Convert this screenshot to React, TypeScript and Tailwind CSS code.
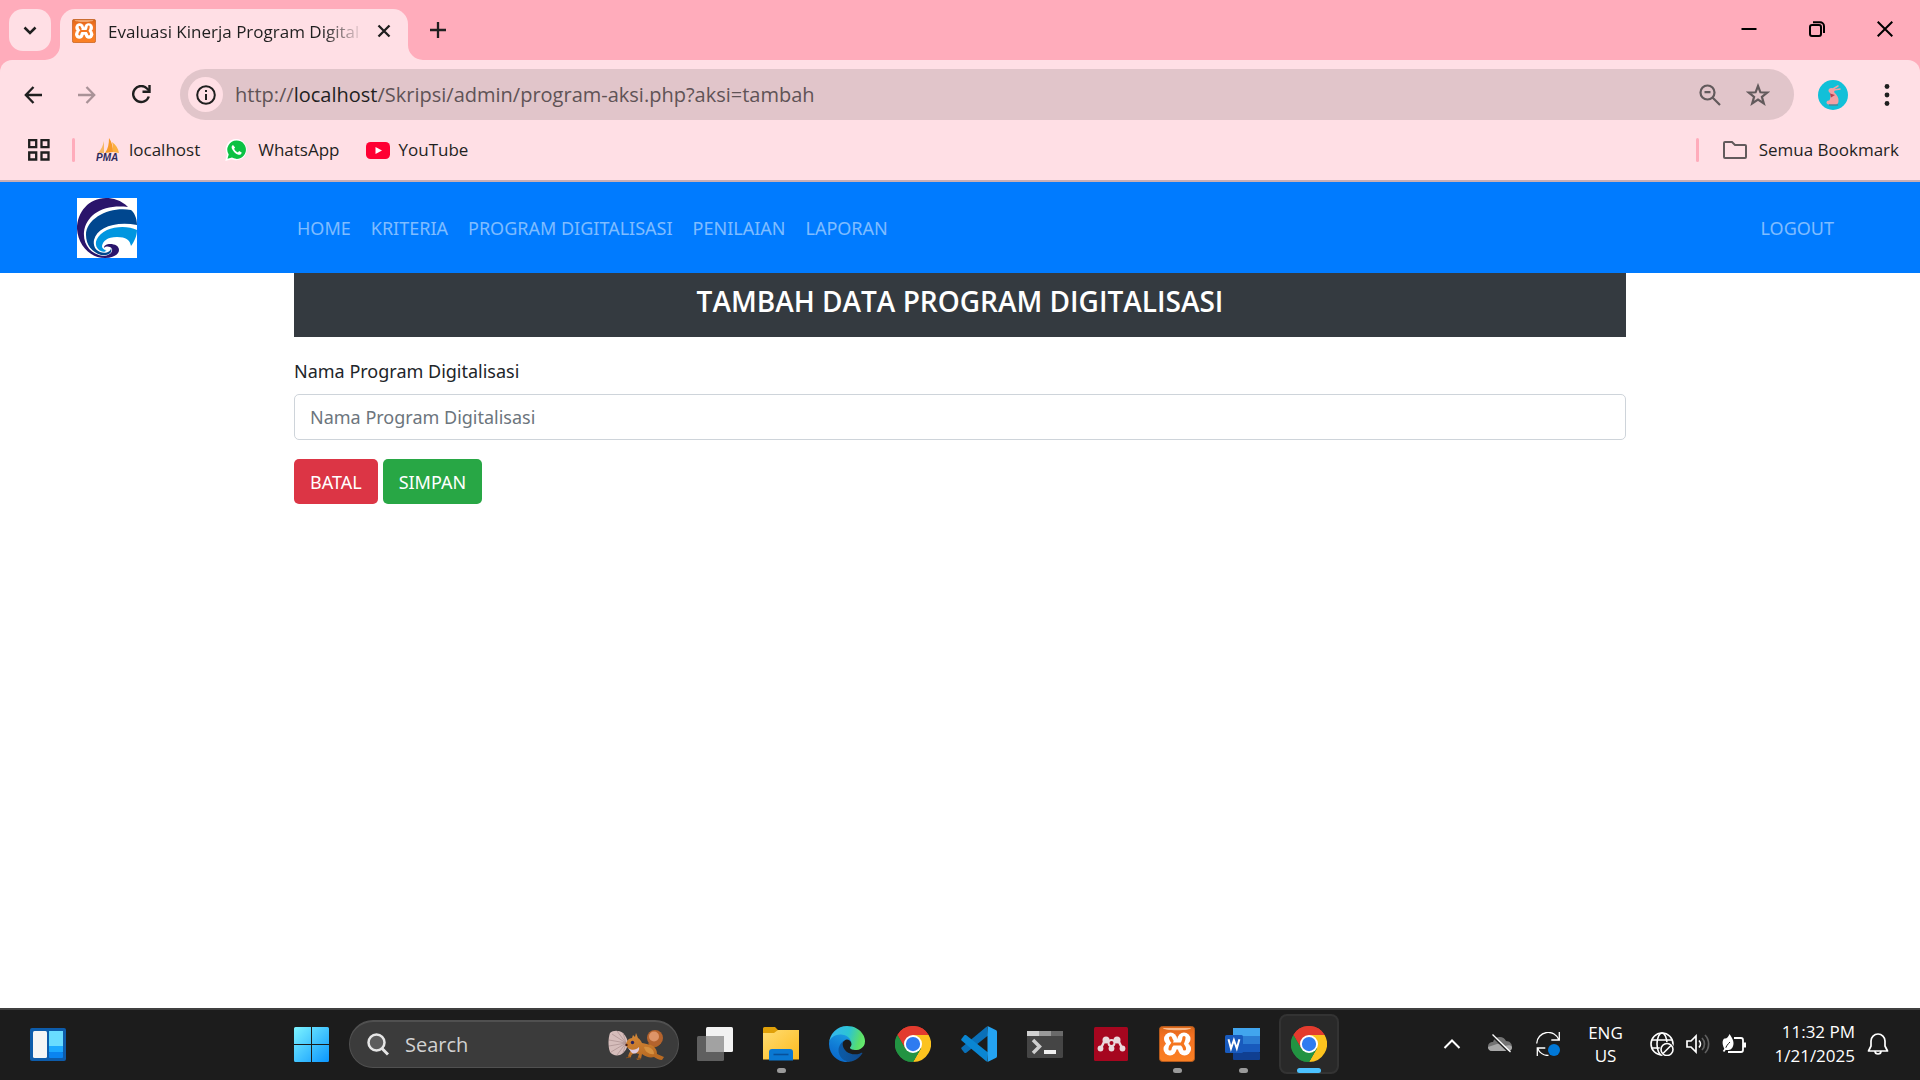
import React from 'react';

type Kids = { children: React.ReactNode };

function XamppIcon({ size, id }: { size: number; id: string }) {
  return (
    <svg width={size} height={size} viewBox="0 0 36 36" aria-hidden="true">
      <defs>
        <linearGradient id={id} x1="0" y1="0" x2="0" y2="1">
          <stop offset="0" stopColor="#d9671a" />
          <stop offset="0.25" stopColor="#f37021" />
          <stop offset="1" stopColor="#fb8124" />
        </linearGradient>
      </defs>
      <rect x="0.5" y="0.5" width="35" height="35" rx="3" fill={`url(#${id})`} stroke="#b65a1c" />
      <path d="M4 2h28c0 1.500-6 2.200-14 2.200S4 3.500 4 2z" fill="#f9b98a" />
      <g fill="#fff">
        <circle cx="11.500" cy="13" r="6.500" />
        <circle cx="25" cy="13" r="6.500" />
        <circle cx="11" cy="23" r="6.500" />
        <circle cx="25.500" cy="23" r="6.500" />
        <path d="M11 12.500h15v11H11z" />
      </g>
      <path d="M11.500 12c.5 1 .5 2 1.500 3M25 11.500c0 3-1 4-2 6.500h-9.500c-1.500 1.500-2.500 3-2.500 5M23 18c1 1.500 2.500 3 2.500 5" fill="none" stroke="#f5761f" strokeWidth="3.200" strokeLinecap="round" strokeLinejoin="round" />
    </svg>
  );
}

function ChromeIcon() {
  return (
    <svg width="36" height="36" viewBox="0 0 48 48" aria-hidden="true">
      <path d="M24 24 3.200 12A24 24 0 0 1 44.800 12z" fill="#e33b2e" />
      <path d="M24 12h20.800A24 24 0 0 1 24 48l10.400-18z" fill="#fcc31e" />
      <path d="M34.400 30 24 48A24 24 0 0 1 3.200 12l10.400 18z" fill="#229342" />
      <path d="M24 12h20.800A24 24 0 0 0 3.200 12l10.400 18z" fill="#e33b2e" />
      <path d="M3.200 12 13.600 30 24 36 34.400 30 24 48A24 24 0 0 1 3.200 12z" fill="#229342" />
      <circle cx="24" cy="24" r="12" fill="#fff" />
      <circle cx="24" cy="24" r="9.500" fill="#2f7bf0" />
    </svg>
  );
}

function EdgeIcon() {
  return (
    <svg width="36" height="36" viewBox="0 0 256 256" aria-hidden="true">
      <defs>
        <linearGradient id="edgeA" x1="0.2" y1="0.5" x2="1" y2="0.5">
          <stop offset="0" stopColor="#0c59a4" />
          <stop offset="1" stopColor="#114a8b" />
        </linearGradient>
        <linearGradient id="edgeB" x1="0.7" y1="0" x2="0.3" y2="1">
          <stop offset="0" stopColor="#1b9de2" />
          <stop offset="0.6" stopColor="#0f78d4" />
          <stop offset="1" stopColor="#0a67c8" />
        </linearGradient>
        <linearGradient id="edgeC" x1="0" y1="0.4" x2="1" y2="0.6">
          <stop offset="0" stopColor="#35b7f1" />
          <stop offset="0.5" stopColor="#2cc4d4" />
          <stop offset="0.85" stopColor="#5ade6b" />
          <stop offset="1" stopColor="#66eb6e" />
        </linearGradient>
      </defs>
      <path d="M231 190.500c-3.400 1.800-6.900 3.400-10.500 4.700a101 101 0 0 1-35.600 6.400c-47 0-87.900-32.300-87.900-73.800a31.400 31.400 0 0 1 16.300-27.200c-42.500 1.800-53.400 46.100-53.400 72 0 73.400 67.600 80.800 82.200 80.800 7.800 0 19.700-2.300 26.800-4.500l1.300-.5a128 128 0 0 0 66.500-52.700 4 4 0 0 0-5.700-5.200z" fill="url(#edgeA)" />
      <path d="M105.700 241.400a79 79 0 0 1-22.700-21.300A80.700 80.700 0 0 1 112.600 100.700c3.100-1.500 8.400-4.100 15.500-4a32 32 0 0 1 25.700 13 32 32 0 0 1 6.300 18.700c0-.2 24.500-79.600-80-79.600-43.900 0-80 41.700-80 78.200a130 130 0 0 0 12.100 56 128 128 0 0 0 156.400 67.100 75.500 75.500 0 0 1-62.900-8.700z" fill="url(#edgeB)" />
      <path d="M152.300 148.900c-.9 1-3.400 2.500-3.400 5.700 0 2.600 1.700 5.200 4.800 7.300 14.400 10 41.500 8.700 41.600 8.700a59.600 59.600 0 0 0 30.300-8.400A61.400 61.400 0 0 0 256 109.300c.3-22.400-8-37.300-11.300-43.900C223.500 24 177.700 0 128 0A128 128 0 0 0 0 126.200c.5-36.500 36.800-66 80-66 3.500 0 23.500.3 42 10 16.300 8.600 24.900 18.900 30.800 29.200 6.200 10.700 7.300 24.100 7.300 29.500 0 5.300-2.700 13.300-7.800 20z" fill="url(#edgeC)" />
    </svg>
  );
}

function VsCodeIcon() {
  return (
    <svg width="36" height="36" viewBox="0 0 36 36" aria-hidden="true">
      <path d="M.8 23.400a1.500 1.500 0 0 1 0-2.200L25.800.4 27 9.600 5.300 26.700c-.6.5-1.300.5-1.900 0z" fill="#0a70b8" />
      <path d="M.8 12.600a1.500 1.500 0 0 0 0 2.200l25 21L27 26.400 5.300 9.300c-.6-.5-1.300-.5-1.900 0z" fill="#0a86d2" />
      <path d="M26.500 0 34.700 4c.8.400 1.300 1.200 1.300 2v24c0 .8-.5 1.600-1.300 2l-8.200 4z" fill="#24a3f2" />
    </svg>
  );
}

function WordIcon() {
  return (
    <svg width="36" height="36" viewBox="0 0 36 36" aria-hidden="true">
      <rect x="8" y="2" width="27" height="8.500" fill="#41a5ee" />
      <rect x="8" y="10" width="27" height="8" fill="#2b7cd3" />
      <rect x="8" y="18" width="27" height="8" fill="#185abd" />
      <rect x="8" y="26" width="27" height="8" rx="1" fill="#103f91" />
      <rect x="0" y="9" width="18" height="18" rx="1.500" fill="#185abd" />
      <path d="M3.500 13.200 6 22.500l2.900-8.500 2.900 8.500 2.600-9.300" fill="none" stroke="#fff" strokeWidth="2" />
    </svg>
  );
}

function LogoMark() {
  return (
    <svg width="60" height="60" viewBox="0 0 60 60" role="img" aria-label="Logo">
      <rect width="60" height="60" fill="#fff" />
      <path d="M51 9C44 2 36 0 29 0 12 0 0 14 0 31c1 15 12 29 28 29 9 0 14-4 14-8s-4-6-9-6c-3 0-6 1-6 4 2-2 6-2 8 1 1 4-4 7-9 7C14 56 6 47 7 34 9 17 26 6 51 9z" fill="#2a146b" />
      <path d="M60 27c0-7-3-13-6-15C35 8 9 19 9 37c0 10 6 17 15 20 7 1 12-2 10-7 0 4-6 6-11 4-5-2-7-7-6-12 3-12 20-19 43-15z" fill="#00478f" />
      <path d="M60 32c0 6-3 12-6 16-1-6-5-9-14-9-10 0-14 4-15 9 0 3 3 4 5 4-2 3-6 2-9-1-5-6-1-14 9-19 9-4 22-4 30 0z" fill="#0096e0" />
      <path d="M28 51c0 2 3 2 4 0" fill="none" stroke="#fff" strokeWidth="1" />
    </svg>
  );
}

function SquirrelArt() {
  return (
    <svg width="58" height="34" viewBox="0 0 58 34" aria-hidden="true">
      <defs>
        <linearGradient id="squirrelFur" x1="0" y1="0" x2="0.3" y2="1">
          <stop offset="0" stopColor="#d98c3a" />
          <stop offset="1" stopColor="#b86a22" />
        </linearGradient>
      </defs>
      <path d="M2 5c3-3 9-3 13 0 3 3 5 7 5 11-1 5-4 9-8 11-4 1-8 0-10-3-2-5-2-14 0-19z" fill="#d6bdbb" />
      <path d="M18 15 4 6m14 9L9 3m9 12L1 12m17 3L1 18m17-3L3 24m15-9L9 27m9-12L15 25m3-10L15 5" stroke="#a98e8e" strokeWidth="0.7" />
      <path d="M53 14c-1 4-5 6-10 5l-3-4c4 1 6 0 8-2z" fill="#b06424" />
      <circle cx="47" cy="10" r="8" fill="#b4632d" />
      <circle cx="46" cy="8.500" r="5" fill="#dd9468" />
      <path d="M18 16c1-4 3-6 6-6l1-3 2 2 1-4 2 5c2 1 3 3 4 5 3 1 8 1 11 3 3 2 4 5 4 8l7 3-2 3c-3 0-6-2-8-3-4 1-8 0-12-3l-1 5-4 1 2-6-4-1c-3 1-4 2-4 4l-3 1c0-4 2-6 3-8-2-1-4-2-5-6z" fill="url(#squirrelFur)" />
      <path d="M20 20c4 3 8 2 11-1 1 4-3 8-7 6z" fill="#e0cbdc" />
      <path d="M36 19c5-1 10 2 10 7-4 1-9-2-10-7z" fill="#d6903f" />
      <circle cx="24.500" cy="14.500" r="1.700" fill="#2b2560" />
      <circle cx="18.500" cy="17" r="1.200" fill="#4a1d12" />
      <path d="m18 30 3-1 2 1M28 31l3-1 2 1" stroke="#7c4a1c" strokeWidth="1" fill="none" />
    </svg>
  );
}

function Slot({ children, label, state }: Kids & { label: string; state?: 'open' | 'active' }) {
  return (
    <button
      aria-label={label}
      className={
        state === 'active'
          ? 'relative flex size-15 items-center justify-center rounded-lg border-2 border-[#333333] bg-[#292929]'
          : 'relative flex size-15 items-center justify-center'
      }
    >
      {children}
      {state === 'open' && <span className="absolute bottom-px h-[5px] w-[9px] rounded-full bg-[#9a9a9a]" />}
      {state === 'active' && <span className="absolute -bottom-px h-[5px] w-6 rounded-full bg-[#4cc2ff]" />}
    </button>
  );
}

function TabStrip() {
  return (
    <div className="flex h-15 items-start bg-[#ffacbb] pt-[9px] pl-[9px]">
      <button aria-label="Search tabs" className="flex size-[42px] items-center justify-center rounded-[14px] bg-[#ffdfe5]">
        <svg width="14" height="9" viewBox="0 0 14 9" fill="none" stroke="#1f1f1f" strokeWidth="2.500">
          <path d="M1.500 1.500 7 7l5.500-5.500" />
        </svg>
      </button>
      <div className="relative ml-[9px] flex h-[51px] w-[348px] items-center rounded-t-[15px] bg-[#ffdfe5] pr-[15px] pb-2 pl-3">
        <svg className="absolute bottom-0 -left-[15px]" width="15" height="15" viewBox="0 0 15 15">
          <path d="M15 0v15H0A15 15 0 0 0 15 0z" fill="#ffdfe5" />
        </svg>
        <svg className="absolute -right-[15px] bottom-0" width="15" height="15" viewBox="0 0 15 15">
          <path d="M0 0v15h15A15 15 0 0 1 0 0z" fill="#ffdfe5" />
        </svg>
        <XamppIcon size={24} id="xamppTab" />
        <span className="mt-0.5 ml-3 flex-1 bg-linear-to-r from-[#1f1f1f] from-80% to-transparent to-95% bg-clip-text text-[17px] leading-6 whitespace-nowrap text-transparent">
          Evaluasi Kinerja Program Digital
        </span>
        <button aria-label="Close tab" className="mr-0.5">
          <svg width="14" height="14" viewBox="0 0 14 14" stroke="#1f1f1f" strokeWidth="2.300">
            <path d="m1.500 1.500 11 11m0-11-11 11" />
          </svg>
        </button>
      </div>
      <button aria-label="New tab" className="mt-[13px] ml-[22px]">
        <svg width="16" height="16" viewBox="0 0 16 16" stroke="#1f1f1f" strokeWidth="2.300">
          <path d="M8 0v16M0 8h16" />
        </svg>
      </button>
      <div className="mt-3 mr-[27px] ml-auto flex items-center gap-[52px]">
        <button aria-label="Minimize">
          <svg width="16" height="16" viewBox="0 0 16 16" stroke="#000" strokeWidth="2">
            <path d="M0.500 8h15" />
          </svg>
        </button>
        <button aria-label="Restore">
          <svg width="16" height="16" viewBox="0 0 16 16" fill="none" stroke="#000" strokeWidth="2">
            <rect x="1" y="4" width="11" height="11" rx="2" />
            <path d="M4 1.300h7a4 4 0 0 1 4 4V12" />
          </svg>
        </button>
        <button aria-label="Close window">
          <svg width="16" height="16" viewBox="0 0 16 16" stroke="#000" strokeWidth="2">
            <path d="m.7.7 14.600 14.600m0-14.600L.7 15.300" />
          </svg>
        </button>
      </div>
    </div>
  );
}

function Toolbar() {
  return (
    <div className="bg-[#ffacbb]">
      <div className="flex items-center rounded-t-xl bg-[#ffdfe5] py-[9px] pr-[26px] pl-6">
        <button aria-label="Back">
          <svg width="18" height="18" viewBox="0 0 18 18" fill="none" stroke="#1f1f1f" strokeWidth="2.300">
            <path d="M9.500 1 1.800 9l7.700 8M1.800 9H18" />
          </svg>
        </button>
        <button aria-label="Forward" className="ml-9">
          <svg width="18" height="18" viewBox="0 0 18 18" fill="none" stroke="#a99297" strokeWidth="2.300">
            <path d="m8.500 1 7.700 8-7.700 8M16.200 9H0" />
          </svg>
        </button>
        <button aria-label="Reload" className="ml-9">
          <svg width="19" height="19" viewBox="0 0 19 19" fill="none" stroke="#1f1f1f" strokeWidth="2.400">
            <path d="M16.800 11.500a8 8 0 1 1-1.800-8L17.500 6" />
            <path d="M17.500 0v6.800h-7" />
          </svg>
        </button>
        <div className="ml-[29px] flex h-[51px] flex-1 items-center rounded-full bg-[#e1c5ca] pr-6 pl-2">
          <button aria-label="Site information" className="flex size-[35px] shrink-0 items-center justify-center rounded-full bg-[#ffdfe5]">
            <svg width="20" height="20" viewBox="0 0 20 20" fill="none" stroke="#1f1f1f" strokeWidth="2">
              <circle cx="10" cy="10" r="8.800" />
              <path d="M10 9v6M10 5v2" />
            </svg>
          </button>
          <div className="ml-3 flex-1 text-[20px] leading-7 whitespace-nowrap text-[#5f5356]">
            http://<span className="text-[#1f1f1f]">localhost</span>/Skripsi/admin/program-aksi.php?aksi=tambah
          </div>
          <button aria-label="Zoom">
            <svg width="22" height="22" viewBox="0 0 22 22" fill="none" stroke="#625a5c" strokeWidth="2.200">
              <circle cx="8.500" cy="8.500" r="7" />
              <path d="m13.500 13.500 7.500 7.500M5.500 8.200h6" />
            </svg>
          </button>
          <button aria-label="Bookmark this page" className="ml-[25px]">
            <svg width="24" height="24" viewBox="0 0 24 24" fill="none" stroke="#625a5c" strokeWidth="2.200">
              <path d="m12 3 2.400 6.300 6.800.3-5.300 4.200 1.900 6.600-5.800-3.800-5.800 3.800 1.900-6.600-5.300-4.200 6.800-.3z" />
            </svg>
          </button>
        </div>
        <button aria-label="Profile" className="ml-6">
          <svg width="30" height="30" viewBox="0 0 30 30">
            <circle cx="15" cy="15" r="15" fill="#12c0d8" />
            <path d="m15 9 5-3M16 10l6-1" stroke="#f4a0a4" strokeWidth="1.500" strokeLinecap="round" />
            <ellipse cx="13.500" cy="10.500" rx="3" ry="2.500" fill="#f4a0a4" />
            <path d="M12 12h4c3 3 5 6 4.500 9 0 2-1 3.500-3 3.500h-5c-2 0-2.500-2-1.500-3.500 1.500-2 2-5 1-9z" fill="#f4a0a4" />
            <circle cx="10.500" cy="22.500" r="2" fill="#f4a0a4" />
            <path d="m12 13.500 5 1.500-4 2.500z" fill="#b8404f" />
            <path d="M11 25h9" stroke="#6a6a78" strokeWidth="1" />
          </svg>
        </button>
        <button aria-label="Menu" className="ml-8">
          <svg width="14" height="24" viewBox="0 0 14 24" fill="#1f1f1f">
            <circle cx="7" cy="3.500" r="2.400" />
            <circle cx="7" cy="12" r="2.400" />
            <circle cx="7" cy="20.500" r="2.400" />
          </svg>
        </button>
      </div>
    </div>
  );
}

function BookmarksBar() {
  return (
    <div className="flex h-[53px] items-center border-b-2 border-[#c9aeb4] bg-[#ffdfe5] pr-[21px] pb-[9px] pl-7 text-[17px] leading-6 text-[#1f1f1f]">
      <button aria-label="Apps">
        <svg width="22" height="22" viewBox="0 0 22 22" fill="none" stroke="#1f1f1f" strokeWidth="2.300">
          <path d="M1.200 1.200h7v7h-7zM13.500 1.200h7v7h-7zM1.200 13.500h7v7h-7zM13.500 13.500h7v7h-7z" />
        </svg>
      </button>
      <span className="ml-[22px] h-6 w-[3px] rounded-full bg-[#ffacbb]" />
      <a href="#localhost" className="ml-[21px] flex items-center gap-[9px]">
        <svg width="24" height="24" viewBox="0 0 24 24">
          <path d="M8 3v12H2c3-3 5-7 6-12z" fill="#f6b765" />
          <path d="M13 0c3 4 4 9 4 14l-8 1c3-4 4-9 4-15z" fill="#f79a28" />
          <path d="M16 4c4 3 6 6 7 11l-6-1c0-4 0-7-1-10z" fill="#fbb040" />
          <text x="0" y="22.500" fontSize="10" fontWeight="700" fontStyle="italic" fontFamily="Liberation Sans, sans-serif" fill="#2e2a5c">PMA</text>
        </svg>
        localhost
      </a>
      <a href="#whatsapp" className="ml-6 flex items-center gap-[10px]">
        <svg width="24" height="24" viewBox="0 0 24 24">
          <path d="M12.500 1A10.500 10.500 0 0 0 3 16.500L1.300 23l6.500-1.700A10.600 10.600 0 1 0 12.500 1z" fill="#fff" />
          <path d="M12.500 2.500A9.200 9.200 0 0 0 4.700 16.500L3.500 20.800l4.500-1.200A9.200 9.200 0 1 0 12.500 2.500z" fill="#0cc143" />
          <path d="M9 7c-1.500.8-1.800 2.500-.8 4.200 1.300 2.500 3.500 4.700 6.300 5.500 1.500.4 3-.5 3.200-2.200l-2.600-1.400-1.200 1.300c-1.800-.8-3-2-3.800-3.700l1-1.200z" fill="#fff" />
        </svg>
        WhatsApp
      </a>
      <a href="#youtube" className="ml-[26px] flex items-center gap-[9px]">
        <svg width="24" height="24" viewBox="0 0 24 24">
          <rect x="0" y="4" width="24" height="17" rx="4.500" fill="#ff0033" />
          <path d="m9.500 9 6.500 3.500-6.500 3.500z" fill="#fff" />
        </svg>
        YouTube
      </a>
      <span className="ml-auto h-6 w-[3px] rounded-full bg-[#ffacbb]" />
      <button className="ml-6 flex items-center gap-3">
        <svg width="24" height="18" viewBox="0 0 24 18" fill="none" stroke="#625a5c" strokeWidth="2">
          <path d="M2 1h7l3 3h10a1 1 0 0 1 1 1v11a1 1 0 0 1-1 1H2a1 1 0 0 1-1-1V2a1 1 0 0 1 1-1z" />
        </svg>
        Semua Bookmark
      </button>
    </div>
  );
}

function SiteNav() {
  return (
    <nav className="flex h-[91px] items-center bg-[#007bff] px-[77px] pr-[86px] font-['Noto_Sans','Open_Sans',sans-serif] text-[18px] leading-7 text-white/50">
      <a href="#home" aria-label="Beranda">
        <LogoMark />
      </a>
      <div className="ml-40 flex flex-1 gap-5">
        <a href="#home">HOME</a>
        <a href="#kriteria">KRITERIA</a>
        <a href="#program">PROGRAM DIGITALISASI</a>
        <a href="#penilaian">PENILAIAN</a>
        <a href="#laporan">LAPORAN</a>
      </div>
      <a href="#logout">LOGOUT</a>
    </nav>
  );
}

function ProgramForm() {
  return (
    <main className="mx-auto w-full max-w-[1332px] flex-1 font-['Noto_Sans','Open_Sans',sans-serif] text-[18px] leading-7 text-[#212529]">
      <h1 className="bg-[#343a40] pt-[11px] pb-[19px] text-center font-['Open_Sans','Noto_Sans',sans-serif] text-[28px] leading-[34px] font-semibold text-white">
        TAMBAH DATA PROGRAM DIGITALISASI
      </h1>
      <form className="mt-5" onSubmit={(e) => e.preventDefault()}>
        <label htmlFor="program" className="block">
          Nama Program Digitalisasi
        </label>
        <input
          id="program"
          type="text"
          placeholder="Nama Program Digitalisasi"
          className="mt-[9px] block h-[46px] w-full rounded-[5px] border border-[#ced4da] px-[15px] placeholder:text-[#6c757d]"
        />
        <div className="mt-[19px] flex gap-[5px] text-white">
          <button type="reset" className="h-[45px] rounded-[5px] bg-[#dc3545] px-4">
            BATAL
          </button>
          <button type="submit" className="h-[45px] rounded-[5px] bg-[#28a745] px-4">
            SIMPAN
          </button>
        </div>
      </form>
    </main>
  );
}

function Tray() {
  return (
    <div className="ml-auto flex items-center pr-[31px] text-[17px] leading-6 text-white">
      <button aria-label="Show hidden icons">
        <svg width="18" height="12" viewBox="0 0 18 12" fill="none" stroke="#fff" strokeWidth="2">
          <path d="m1.500 10 7.500-7.500L16.500 10" />
        </svg>
      </button>
      <button aria-label="OneDrive" className="ml-[27px]">
        <svg width="24" height="20" viewBox="0 0 24 20">
          <path d="M5 8a7 7 0 0 1 13-1c4 0 6 3 6 6a4 4 0 0 1-4 4H4a4.500 4.500 0 0 1 1-9z" fill="#737373" />
          <path d="M4 17c-3 0-4-2-4-4l9-3c5 0 6 2 8 2 3-1 6-1 7 1a4 4 0 0 1-4 4z" fill="#a8a8a8" />
          <path d="M3.500 1.500 21.500 19" stroke="#1c1c1c" strokeWidth="1.500" />
          <path d="M4.500 0.500 22.500 18" stroke="#fff" strokeWidth="1.300" />
        </svg>
      </button>
      <button aria-label="Update" className="ml-6">
        <svg width="24" height="24" viewBox="0 0 24 24" fill="none" stroke="#fff" strokeWidth="1.300">
          <path d="M.7 11.500A11.500 11.500 0 0 1 23 8M23.300 0v8h-8M1.300 24v-8h8M1.500 16a11.500 11.500 0 0 0 11 7.500" />
          <circle cx="18" cy="18" r="6" fill="#0078d7" stroke="none" />
        </svg>
      </button>
      <button aria-label="Language" className="ml-6 w-[42px] text-center leading-[23px]">
        ENG
        <br />
        US
      </button>
      <button aria-label="Quick settings" className="ml-6 flex items-center gap-3">
        <svg width="24" height="24" viewBox="0 0 24 24" fill="none" stroke="#fff" strokeWidth="1.600">
          <circle cx="12" cy="12" r="11" />
          <ellipse cx="12" cy="12" rx="5" ry="11" />
          <path d="M2 8h20M2 16h11" />
          <circle cx="17" cy="17.500" r="7.500" fill="#1c1c1c" stroke="none" />
          <circle cx="17" cy="17.500" r="6" />
          <path d="m13 21.500 8-8" />
        </svg>
        <svg width="24" height="20" viewBox="0 0 24 20" fill="none" strokeWidth="1.700">
          <path d="M1 7v6h4l5 5V2L5 7z" stroke="#fff" />
          <path d="M13 6.500a5 5 0 0 1 0 7" stroke="#fff" />
          <path d="M16 4a8.500 8.500 0 0 1 0 12M19 1a13 13 0 0 1 0 18" stroke="#606060" />
        </svg>
        <svg width="24" height="20" viewBox="0 0 24 20" fill="none" stroke="#fff" strokeWidth="1.800">
          <path d="M12 4h7a2 2 0 0 1 2 2v10a2 2 0 0 1-2 2H6" />
          <path d="M22.500 8.500v5" strokeWidth="3" />
          <path d="M7.500 0c2 3 4 6 4 9 0 4-2 7-5 7-2 0-3 0-4-1C-1 9 1 4 3 4.500c2 0 3.500-2 4.500-4.500z" fill="#fff" stroke="none" />
          <path d="M3 16c1-4 3-6 5-8" stroke="#1c1c1c" strokeWidth="1" />
          <path d="M1.500 17.500 4 14" />
        </svg>
      </button>
      <button aria-label="Clock" className="ml-7 text-right">
        11:32 PM
        <br />
        1/21/2025
      </button>
      <button aria-label="Notifications" className="ml-3">
        <svg width="22" height="24" viewBox="0 0 22 24" fill="none" stroke="#fff" strokeWidth="1.700">
          <path d="M11 2a7 7 0 0 0-7 7v5l-2.500 5h19L18 14V9a7 7 0 0 0-7-7z" strokeLinejoin="round" />
          <path d="M8 19a3 3 0 0 0 6 0" />
        </svg>
      </button>
    </div>
  );
}

function Taskbar() {
  return (
    <footer className="flex h-18 items-center border-t-2 border-[#404040] bg-[#1c1c1c] pb-0.5 pl-[30px]">
      <button aria-label="Widgets">
        <svg width="36" height="33" viewBox="0 0 36 33">
          <rect width="36" height="33" rx="2" fill="#0d5cab" />
          <rect x="3" y="3" width="14" height="27" rx="1.500" fill="#f5f5f5" />
          <rect x="19" y="3" width="14" height="15" fill="#69dcff" />
          <rect x="19" y="18" width="14" height="6" fill="#1ca9ff" />
          <rect x="19" y="24" width="14" height="6" rx="1" fill="#0a84f0" />
        </svg>
      </button>
      <button aria-label="Start" className="ml-57">
        <svg width="35" height="35" viewBox="0 0 35 35">
          <defs>
            <linearGradient id="winStart" x1="0" y1="0" x2="1" y2="1">
              <stop offset="0" stopColor="#7df4ff" />
              <stop offset="1" stopColor="#0a96ff" />
            </linearGradient>
          </defs>
          <path d="M1.500 0H17v17H0V1.500A1.500 1.500 0 0 1 1.500 0zM18 0h15.500A1.500 1.500 0 0 1 35 1.500V17H18zM0 18h17v17H1.500A1.500 1.500 0 0 1 0 33.500zM18 18h17v15.500a1.500 1.500 0 0 1-1.500 1.500H18z" fill="url(#winStart)" />
        </svg>
      </button>
      <label className="ml-5 flex h-12 w-[330px] items-center rounded-full border border-t-2 border-[#505050] bg-[#3b3b3b] pr-3 pl-[17px]">
        <svg width="22" height="23" viewBox="0 0 22 23" fill="none" stroke="#e6e6e6" strokeWidth="2.500">
          <circle cx="9.500" cy="9.500" r="8" fill="#5c5c5c" />
          <path d="m15 15.500 6 6" strokeWidth="3" />
        </svg>
        <input
          type="search"
          aria-label="Search"
          placeholder="Search"
          className="ml-4 min-w-0 flex-1 bg-transparent text-[20px] leading-7 placeholder:text-[#d2d2d2]"
        />
        <SquirrelArt />
      </label>
      <div className="ml-1.5 flex gap-1.5">
        <Slot label="Task view">
          <svg width="36" height="34" viewBox="0 0 36 34">
            <rect x="9" y="0" width="27" height="25" rx="1.500" fill="#f2f2f2" />
            <rect x="0" y="9" width="27" height="25" rx="1.500" fill="#5f5f5f" />
            <rect x="9" y="9" width="18" height="16" fill="#a2a2a2" />
          </svg>
        </Slot>
        <Slot label="File Explorer" state="open">
          <svg width="36" height="34" viewBox="0 0 36 34">
            <defs>
              <linearGradient id="folderFill" x1="0" y1="0" x2="1" y2="1">
                <stop offset="0" stopColor="#ffdc72" />
                <stop offset="1" stopColor="#fdbb1e" />
              </linearGradient>
            </defs>
            <path d="M0 1.500A1.500 1.500 0 0 1 1.500 0H12l3.500 3.500L12 8H0z" fill="#e0a008" />
            <path d="M0 6h11l4-3h21v29.500H0z" fill="url(#folderFill)" />
            <path d="M6 33.500V25a3 3 0 0 1 3-3h18a3 3 0 0 1 3 3v8.500z" fill="#0a78d2" />
            <path d="M10.500 27.500h15" stroke="#07509a" strokeWidth="1.600" />
          </svg>
        </Slot>
        <Slot label="Edge">
          <EdgeIcon />
        </Slot>
        <Slot label="Chrome">
          <ChromeIcon />
        </Slot>
        <Slot label="Visual Studio Code">
          <VsCodeIcon />
        </Slot>
        <Slot label="Terminal">
          <svg width="36" height="27" viewBox="0 0 36 27">
            <rect width="36" height="27" rx="1.500" fill="#454545" />
            <path d="M0 0h12v5H0z" fill="#cfcfcf" />
            <path d="M12 0h12v5H12z" fill="#9a9a9a" />
            <path d="M24 0h12v5H24z" fill="#6a6a6a" />
            <path d="m6 9 6.500 6.500L6 22" fill="none" stroke="#cfcfcf" strokeWidth="3.500" />
            <path d="M17 21h12" stroke="#efefef" strokeWidth="4" />
          </svg>
        </Slot>
        <Slot label="Mendeley">
          <svg width="34" height="34" viewBox="0 0 34 34">
            <rect width="34" height="34" rx="1.500" fill="#a6061f" />
            <g fill="#ead9dc">
              <circle cx="6.500" cy="21.500" r="2.900" />
              <circle cx="17.500" cy="21.500" r="2.900" />
              <circle cx="28.500" cy="21.500" r="2.900" />
              <circle cx="12" cy="13" r="3.500" />
              <circle cx="23" cy="13" r="3.500" />
            </g>
            <path d="m10.500 14-3 6M24.500 14l3 6" stroke="#ead9dc" strokeWidth="2.500" />
            <circle cx="17.500" cy="16" r="3" fill="#a6061f" stroke="#ead9dc" strokeWidth="2" />
          </svg>
        </Slot>
        <Slot label="XAMPP" state="open">
          <XamppIcon size={36} id="xamppBar" />
        </Slot>
        <Slot label="Word" state="open">
          <WordIcon />
        </Slot>
        <Slot label="Chrome window" state="active">
          <ChromeIcon />
        </Slot>
      </div>
      <Tray />
    </footer>
  );
}

export default function App() {
  return (
    <div className="flex min-h-screen flex-col bg-white font-['Open_Sans','Noto_Sans',sans-serif]">
      <header>
        <TabStrip />
        <Toolbar />
        <BookmarksBar />
      </header>
      <SiteNav />
      <ProgramForm />
      <Taskbar />
    </div>
  );
}
